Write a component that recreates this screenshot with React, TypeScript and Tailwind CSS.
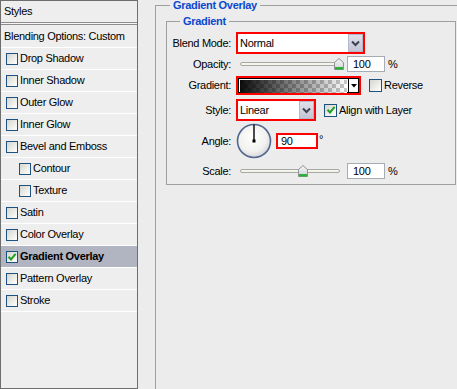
import React from 'react';

const layers = [
  { name: 'Drop Shadow' },
  { name: 'Inner Shadow' },
  { name: 'Outer Glow' },
  { name: 'Inner Glow' },
  { name: 'Bevel and Emboss' },
  { name: 'Contour', indent: true },
  { name: 'Texture', indent: true },
  { name: 'Satin' },
  { name: 'Color Overlay' },
  { name: 'Gradient Overlay', selected: true },
  { name: 'Pattern Overlay' },
  { name: 'Stroke' },
];

const Checkbox: React.FC<{ checked?: boolean; size?: 'sm' | 'md' }> = ({ checked, size = 'sm' }) => (
  <span
    className={`flex shrink-0 items-center justify-center border border-[#1c5180] bg-gradient-to-br from-[#d6d6ce] to-white ${
      size === 'sm' ? 'h-[12px] w-[12px]' : 'h-[13px] w-[13px]'
    }`}
  >
    {checked && (
      <svg width="10" height="10" viewBox="0 0 10 10">
        <path d="M1.5 4.8 L4 7.5 L8.6 1.8" fill="none" stroke="#21a121" strokeWidth="2" />
      </svg>
    )}
  </span>
);

const DropButton = () => (
  <span className="flex h-full w-[15px] shrink-0 items-center justify-center border border-[#b4b8cc] bg-gradient-to-b from-[#dfe0ea] to-[#c3c5d6]">
    <svg width="9" height="7" viewBox="0 0 9 7">
      <path d="M1 1.5 L4.5 5 L8 1.5" fill="none" stroke="#3c4150" strokeWidth="2" />
    </svg>
  </span>
);

const Thumb = () => (
  <svg width="10" height="12" viewBox="0 0 10 12">
    <defs>
      <linearGradient id="thumbFill" x1="0" y1="0" x2="0" y2="1">
        <stop offset="0" stopColor="#f6f6f6" />
        <stop offset="1" stopColor="#cfd2d6" />
      </linearGradient>
    </defs>
    <path d="M0.5 4.5 L5 0.5 L9.5 4.5 V11.5 H0.5 Z" fill="url(#thumbFill)" stroke="#8c9296" />
    <rect x="1" y="9" width="8" height="2.5" fill="#2cb03a" />
  </svg>
);

const Slider: React.FC<{ at: number }> = ({ at }) => (
  <div className="relative ml-[9px] flex h-full w-[104px] items-center">
    <div className="h-[4px] w-[100px] rounded-full border border-[#a9a9a4] bg-[#f4f4ee]" />
    <div className="absolute top-[2px] flex" style={{ left: at }}>
      <Thumb />
    </div>
  </div>
);

const NumberBox: React.FC<{ value: string }> = ({ value }) => (
  <div className="ml-[3px] flex h-[16px] w-[38px] items-center border border-[#a5acb5] bg-white pl-[5px]">
    {value}
  </div>
);

const GradientSwatch = () => (
  <svg width="107" height="13" viewBox="0 0 107 13" className="block">
    <defs>
      <pattern id="checker" width="8" height="8" patternUnits="userSpaceOnUse">
        <rect width="8" height="8" fill="#ffffff" />
        <rect width="4" height="4" fill="#c8c8c8" />
        <rect x="4" y="4" width="4" height="4" fill="#c8c8c8" />
      </pattern>
      <linearGradient id="fade" x1="0" y1="0" x2="1" y2="0">
        <stop offset="0" stopColor="#000" stopOpacity="0.95" />
        <stop offset="1" stopColor="#000" stopOpacity="0" />
      </linearGradient>
    </defs>
    <rect width="107" height="13" fill="url(#checker)" />
    <rect width="107" height="13" fill="url(#fade)" />
  </svg>
);

const AngleDial = () => (
  <svg width="36" height="36" viewBox="0 0 36 36">
    <defs>
      <radialGradient id="dialFill" cx="0.45" cy="0.4" r="0.6">
        <stop offset="0" stopColor="#ffffff" />
        <stop offset="0.7" stopColor="#f1f1ef" />
        <stop offset="1" stopColor="#d5d6d8" />
      </radialGradient>
    </defs>
    <circle cx="18" cy="18" r="16.5" fill="url(#dialFill)" stroke="#52668f" strokeWidth="1.6" />
    <line x1="18" y1="18" x2="18" y2="1.5" stroke="#000" strokeWidth="1.4" />
    <rect x="16.5" y="16.5" width="3" height="3" fill="#000" />
  </svg>
);

export default function App() {
  return (
    <div className="flex h-[389px] w-[457px] overflow-hidden bg-[#ececec] font-['Liberation_Sans',Arial,sans-serif] text-[11px] tracking-[-0.3px] text-black">
      {/* layer style list */}
      <div className="flex h-full w-[138px] shrink-0 flex-col border border-[#6e6e6e] bg-[#eeeeee]">
        <div className="flex h-[21px] items-center pl-[3px]">Styles</div>
        <div className="h-[3px] border-y border-[#8c8c8c] bg-[#f6f6f6]" />
        <div className="flex h-[23px] items-center border-b border-white pl-[3px]">Blending Options: Custom</div>
        {layers.map((layer) => (
          <div
            key={layer.name}
            className={`flex h-[22px] items-center gap-[2px] border-b border-white ${
              layer.indent ? 'pl-[18px]' : 'pl-[5px]'
            } ${layer.selected ? 'bg-[#b1b4c1] font-bold' : ''}`}
          >
            <Checkbox checked={layer.selected} />
            <span>{layer.name}</span>
          </div>
        ))}
      </div>

      {/* options */}
      <div className="pl-[17px]">
        <fieldset className="h-[420px] w-[320px] min-w-0 border border-[#a0a0a0]">
          <legend className="ml-[14px] px-[3px] text-[11px] leading-[11px] font-bold text-[#0b47cf]">
            Gradient Overlay
          </legend>

          <fieldset className="mt-[5px] ml-[10px] w-[290px] min-w-0 border border-[#a0a0a0] pb-[5px]">
            <legend className="ml-[13px] px-[3px] text-[11px] leading-[11px] font-bold text-[#0b47cf]">
              Gradient
            </legend>

            <div className="mt-[5px] flex h-[22px] items-center">
              <span className="w-[64px] text-right">Blend Mode:</span>
              <div className="ml-[5px] flex h-full w-[129px] items-center border-2 border-[#ff0000] bg-white pl-[2px]">
                <span className="flex-1">Normal</span>
                <DropButton />
              </div>
            </div>

            <div className="mt-[2px] flex h-[16px] items-center">
              <span className="w-[64px] text-right">Opacity:</span>
              <Slider at={94} />
              <NumberBox value="100" />
              <span className="ml-[3px]">%</span>
            </div>

            <div className="mt-[4px] flex h-[19px] items-center">
              <span className="w-[64px] text-right">Gradient:</span>
              <div className="ml-[5px] flex h-full w-[125px] border-2 border-[#ff0000]">
                <div className="flex flex-1 border border-black bg-white">
                  <div className="flex-1 p-[1px]">
                    <GradientSwatch />
                  </div>
                  <div className="flex w-[10px] items-center justify-center border-l border-black">
                    <svg width="6" height="4" viewBox="0 0 6 4">
                      <path d="M0 0 H6 L3 3.5 Z" fill="#000" />
                    </svg>
                  </div>
                </div>
              </div>
              <span className="ml-[8px] flex items-center gap-[2px]">
                <Checkbox size="md" />
                Reverse
              </span>
            </div>

            <div className="mt-[4px] flex h-[22px] items-center">
              <span className="w-[64px] text-right">Style:</span>
              <div className="ml-[5px] flex h-full w-[80px] items-center border-2 border-[#ff0000] bg-white pl-[2px]">
                <span className="flex-1">Linear</span>
                <DropButton />
              </div>
              <span className="ml-[8px] flex items-center gap-[2px]">
                <Checkbox size="md" checked />
                Align with Layer
              </span>
            </div>

            <div className="mt-[2px] flex h-[36px] items-center">
              <span className="w-[64px] text-right">Angle:</span>
              <div className="ml-[5px] flex">
                <AngleDial />
              </div>
              <div className="ml-[4px] flex h-[16px] w-[42px] items-center border-2 border-[#ff0000] bg-white pl-[3px]">
                90
              </div>
              <span className="mb-[4px] ml-[1px]">°</span>
            </div>

            <div className="mt-[4px] flex h-[16px] items-center">
              <span className="w-[64px] text-right">Scale:</span>
              <Slider at={58} />
              <NumberBox value="100" />
              <span className="ml-[3px]">%</span>
            </div>
          </fieldset>
        </fieldset>
      </div>
    </div>
  );
}
